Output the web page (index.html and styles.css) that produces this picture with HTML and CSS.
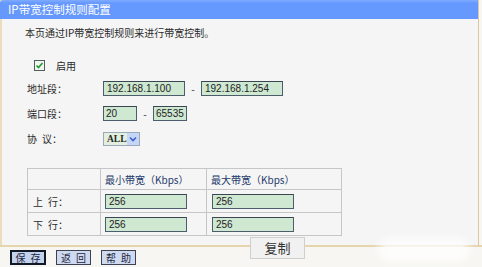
FILE: index.html
```html
<!DOCTYPE html>
<html lang="zh-CN">
<head>
    <meta charset="UTF-8">
    <title>IP带宽控制规则配置</title>
    <link rel="stylesheet" href="styles.css">
</head>
<body>
    <div class="frame">
        <div class="titlebar">IP带宽控制规则配置</div>
        <div class="panel">
            <p class="intro">本页通过IP带宽控制规则来进行带宽控制。</p>
            <div class="enable">
                <span class="check">
                    <svg width="11" height="11" viewBox="0 0 11 11">
                        <rect x="0.5" y="0.5" width="10" height="10" fill="#f4f6f4" stroke="#4f5f5a"/>
                        <polyline points="2.5,5.5 4.5,7.5 8.5,3" fill="none" stroke="#1f9a2a" stroke-width="1.6"/>
                    </svg>
                </span>
                <span>启用</span>
            </div>

            <div class="form">
                <div class="label">地址段：</div>
                <div class="field">
                    <input type="text" class="txt ip" value="192.168.1.100">
                    <span class="dash">-</span>
                    <input type="text" class="txt ip" value="192.168.1.254">
                </div>

                <div class="label">端口段：</div>
                <div class="field">
                    <input type="text" class="txt port" value="20">
                    <span class="dash">-</span>
                    <input type="text" class="txt port" value="65535">
                </div>

                <div class="label">协&ensp;议：</div>
                <div class="field">
                    <span class="select">
                        <span class="select-val">ALL</span>
                        <span class="select-arrow">
                            <svg width="8" height="6" viewBox="0 0 8 6"><polyline points="1,1.5 4,4.5 7,1.5" fill="none" stroke="#3b63c9" stroke-width="1.6"/></svg>
                        </span>
                    </span>
                </div>
            </div>

            <table class="bw">
                <tr class="head">
                    <td class="c1"></td>
                    <td class="c2">最小带宽（Kbps）</td>
                    <td class="c3">最大带宽（Kbps）</td>
                </tr>
                <tr>
                    <td class="c1">上&ensp;行：</td>
                    <td class="c2"><input type="text" class="txt bwin" value="256"></td>
                    <td class="c3"><input type="text" class="txt bwin" value="256"></td>
                </tr>
                <tr>
                    <td class="c1">下&ensp;行：</td>
                    <td class="c2"><input type="text" class="txt bwin" value="256"></td>
                    <td class="c3"><input type="text" class="txt bwin" value="256"></td>
                </tr>
            </table>
        </div>
    </div>

    <div class="actions">
        <button class="btn btn-main">保&ensp;存</button>
        <button class="btn">返&ensp;回</button>
        <button class="btn">帮&ensp;助</button>
    </div>

    <div class="copy-pop">复制</div>
    <div class="smudge"></div>
</body>
</html>
```

FILE: styles.css
```css
html, body {
    margin: 0;
    padding: 0;
}
body {
    width: 482px;
    height: 267px;
    overflow: hidden;
    position: relative;
    background-color: #f7f6f2;
    font-family: "Noto Sans CJK SC", "Liberation Sans", sans-serif;
    font-size: 10px;
    color: #2a2a2a;
}
.frame {
    width: 476px;
    border-left: 2px solid #eadcbc;
    border-right: 1px solid #d9c8a2;
    background-color: #f5f5f5;
}
.titlebar {
    height: 19px;
    line-height: 19px;
    margin-left: -2px;
    padding-left: 8px;
    background: linear-gradient(#80acff 0, #6699ff 3px, #6597fc 100%);
    border-top-left-radius: 3px;
    color: #ffffff;
    font-size: 11.5px;
}
.panel {
    padding: 0 0 9px 23px;
}
.intro {
    margin: 7px 0 0 0;
    line-height: 14px;
}
.enable {
    display: flex;
    align-items: center;
    gap: 11px;
    height: 14px;
    margin: 18px 0 0 9px;
}
.check {
    display: flex;
}
.form {
    display: grid;
    grid-template-columns: 76px auto;
    grid-auto-rows: 25px;
    align-items: center;
    margin: 4px 0 0 2px;
}
.field {
    display: flex;
    align-items: center;
    gap: 6px;
}
.dash {
    width: 4px;
    text-align: center;
}
.txt {
    box-sizing: border-box;
    height: 15px;
    margin: 0;
    padding: 0 3px;
    border: 1px solid #4d5d6b;
    border-top-color: #3a4652;
    background-color: #cfe8d1;
    font-family: "Liberation Sans", sans-serif;
    font-size: 10px;
    color: #222;
    outline: none;
}
.ip {
    width: 82px;
}
.port {
    width: 34px;
    padding: 0 2px;
}
.select {
    display: inline-flex;
    align-items: stretch;
    height: 14px;
    width: 37px;
    box-sizing: border-box;
    border: 1px solid #9aaabb;
    background-color: #e3eedf;
}
.select-val {
    flex: 1;
    padding-left: 3px;
    line-height: 12px;
    font-family: "Liberation Serif", serif;
    font-weight: bold;
    font-size: 9.5px;
    color: #1d2a1d;
}
.select-arrow {
    width: 13px;
    display: flex;
    align-items: center;
    justify-content: center;
    background-color: #c6d6f7;
}
.bw {
    margin-top: 17px;
    margin-left: 2px;
    border-collapse: collapse;
}
.bw td {
    border: 1px solid #c6c6c6;
    padding: 0 0 0 4px;
    height: 22px;
}
.bw .head td {
    height: 20px;
    color: #23396b;
}
.bw .c1 {
    width: 67px;
    padding-left: 5px;
}
.bw .c2 {
    width: 101px;
}
.bw .c3 {
    width: 130px;
}
.bwin {
    width: 82px;
    height: 15px;
    display: block;
}
.bw .c3 .bwin {
    margin-left: 1px;
}
.actions {
    display: flex;
    gap: 10px;
    border-top: 2px solid #e6d4ad;
    padding: 3px 0 0 10px;
}
.btn {
    box-sizing: border-box;
    width: 35px;
    height: 15px;
    padding: 0;
    border: 1px solid #3b4353;
    background-color: #cfdaf0;
    font-family: "Noto Sans CJK SC", sans-serif;
    font-size: 10px;
    line-height: 12px;
    color: #1e2640;
}
.btn-main {
    width: 36px;
    border: 2px solid #111826;
    background-color: #c4d2ec;
}
.copy-pop {
    position: absolute;
    left: 250px;
    top: 237px;
    width: 55px;
    height: 22px;
    box-sizing: border-box;
    border: 1px solid #cfcfcf;
    background-color: #f1f1f1;
    text-align: center;
    line-height: 20px;
    font-size: 13px;
    color: #333;
}
.smudge {
    position: absolute;
    left: 378px;
    top: 238px;
    width: 92px;
    height: 24px;
    border-radius: 12px;
    background-color: rgba(255, 255, 255, 0.75);
    filter: blur(4px);
}
```
